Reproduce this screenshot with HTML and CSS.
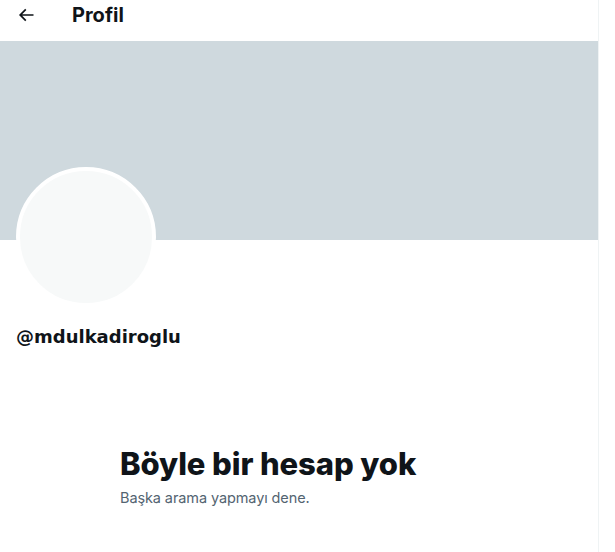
FILE: index.html
```html
<!DOCTYPE html>
<html lang="tr">
<head>
<meta charset="utf-8">
<title>Profil</title>
<link rel="stylesheet" href="styles.css">
</head>
<body>
<div class="page">
  <main class="column">
    <header class="topbar">
      <span class="back">
        <svg viewBox="0 0 24 24" width="20" height="20" aria-hidden="true"><path d="M7.414 13l5.043 5.04-1.414 1.42L3.586 12l7.457-7.46 1.414 1.42L7.414 11H21v2H7.414z"/></svg>
      </span>
      <h1 class="title">Profil</h1>
    </header>
    <div class="banner"></div>
    <div class="profile">
      <div class="avatar"></div>
      <div class="handle">@mdulkadiroglu</div>
    </div>
    <section class="empty">
      <h2 class="empty-title">Böyle bir hesap yok</h2>
      <p class="empty-sub">Başka arama yapmayı dene.</p>
    </section>
  </main>
  <aside class="side"></aside>
</div>
</body>
</html>
```
FILE: styles.css
```css
html, body {
  margin: 0;
  padding: 0;
  background: #fff;
}
body {
  font-family: "Inter", "Liberation Sans", sans-serif;
  color: #0f1419;
}
.page {
  display: flex;
  height: 552px;
  overflow: hidden;
}
.column {
  width: 598px;
  flex: none;
  border-right: 1px solid #eff3f4;
  display: flex;
  flex-direction: column;
}
.side {
  flex: 1;
}
.topbar {
  height: 41px;
  display: flex;
  align-items: flex-start;
  box-sizing: border-box;
  padding: 3px 0 0 16px;
}
.back {
  width: 20px;
  height: 24px;
  display: flex;
  align-items: center;
  justify-content: center;
  margin-right: 36px;
}
.back svg {
  fill: #0f1419;
}
.title {
  margin: 0;
  font-size: 20px;
  font-weight: 700;
  line-height: 24px;
}
.banner {
  height: 199px;
  background: #cfd9de;
}
.profile {
  padding: 0 16px;
  height: 108px;
  display: flex;
  flex-direction: column;
}
.avatar {
  width: 132px;
  height: 132px;
  border-radius: 50%;
  background: #f7f9f9;
  border: 4px solid #fff;
  margin-top: -73px;
  margin-left: 0;
  flex: none;
}
.handle {
  margin-top: 18px;
  font-family: "DejaVu Sans", sans-serif;
  font-size: 18px;
  font-weight: 700;
  line-height: 24px;
}
.empty {
  padding: 98px 0 0 120px;
}
.empty-title {
  margin: 0;
  font-size: 31px;
  font-weight: 800;
  line-height: 36px;
  letter-spacing: -0.1px;
}
.empty-sub {
  margin: 6px 0 0;
  font-size: 14.5px;
  line-height: 20px;
  color: #536471;
  letter-spacing: -0.1px;
}
```
